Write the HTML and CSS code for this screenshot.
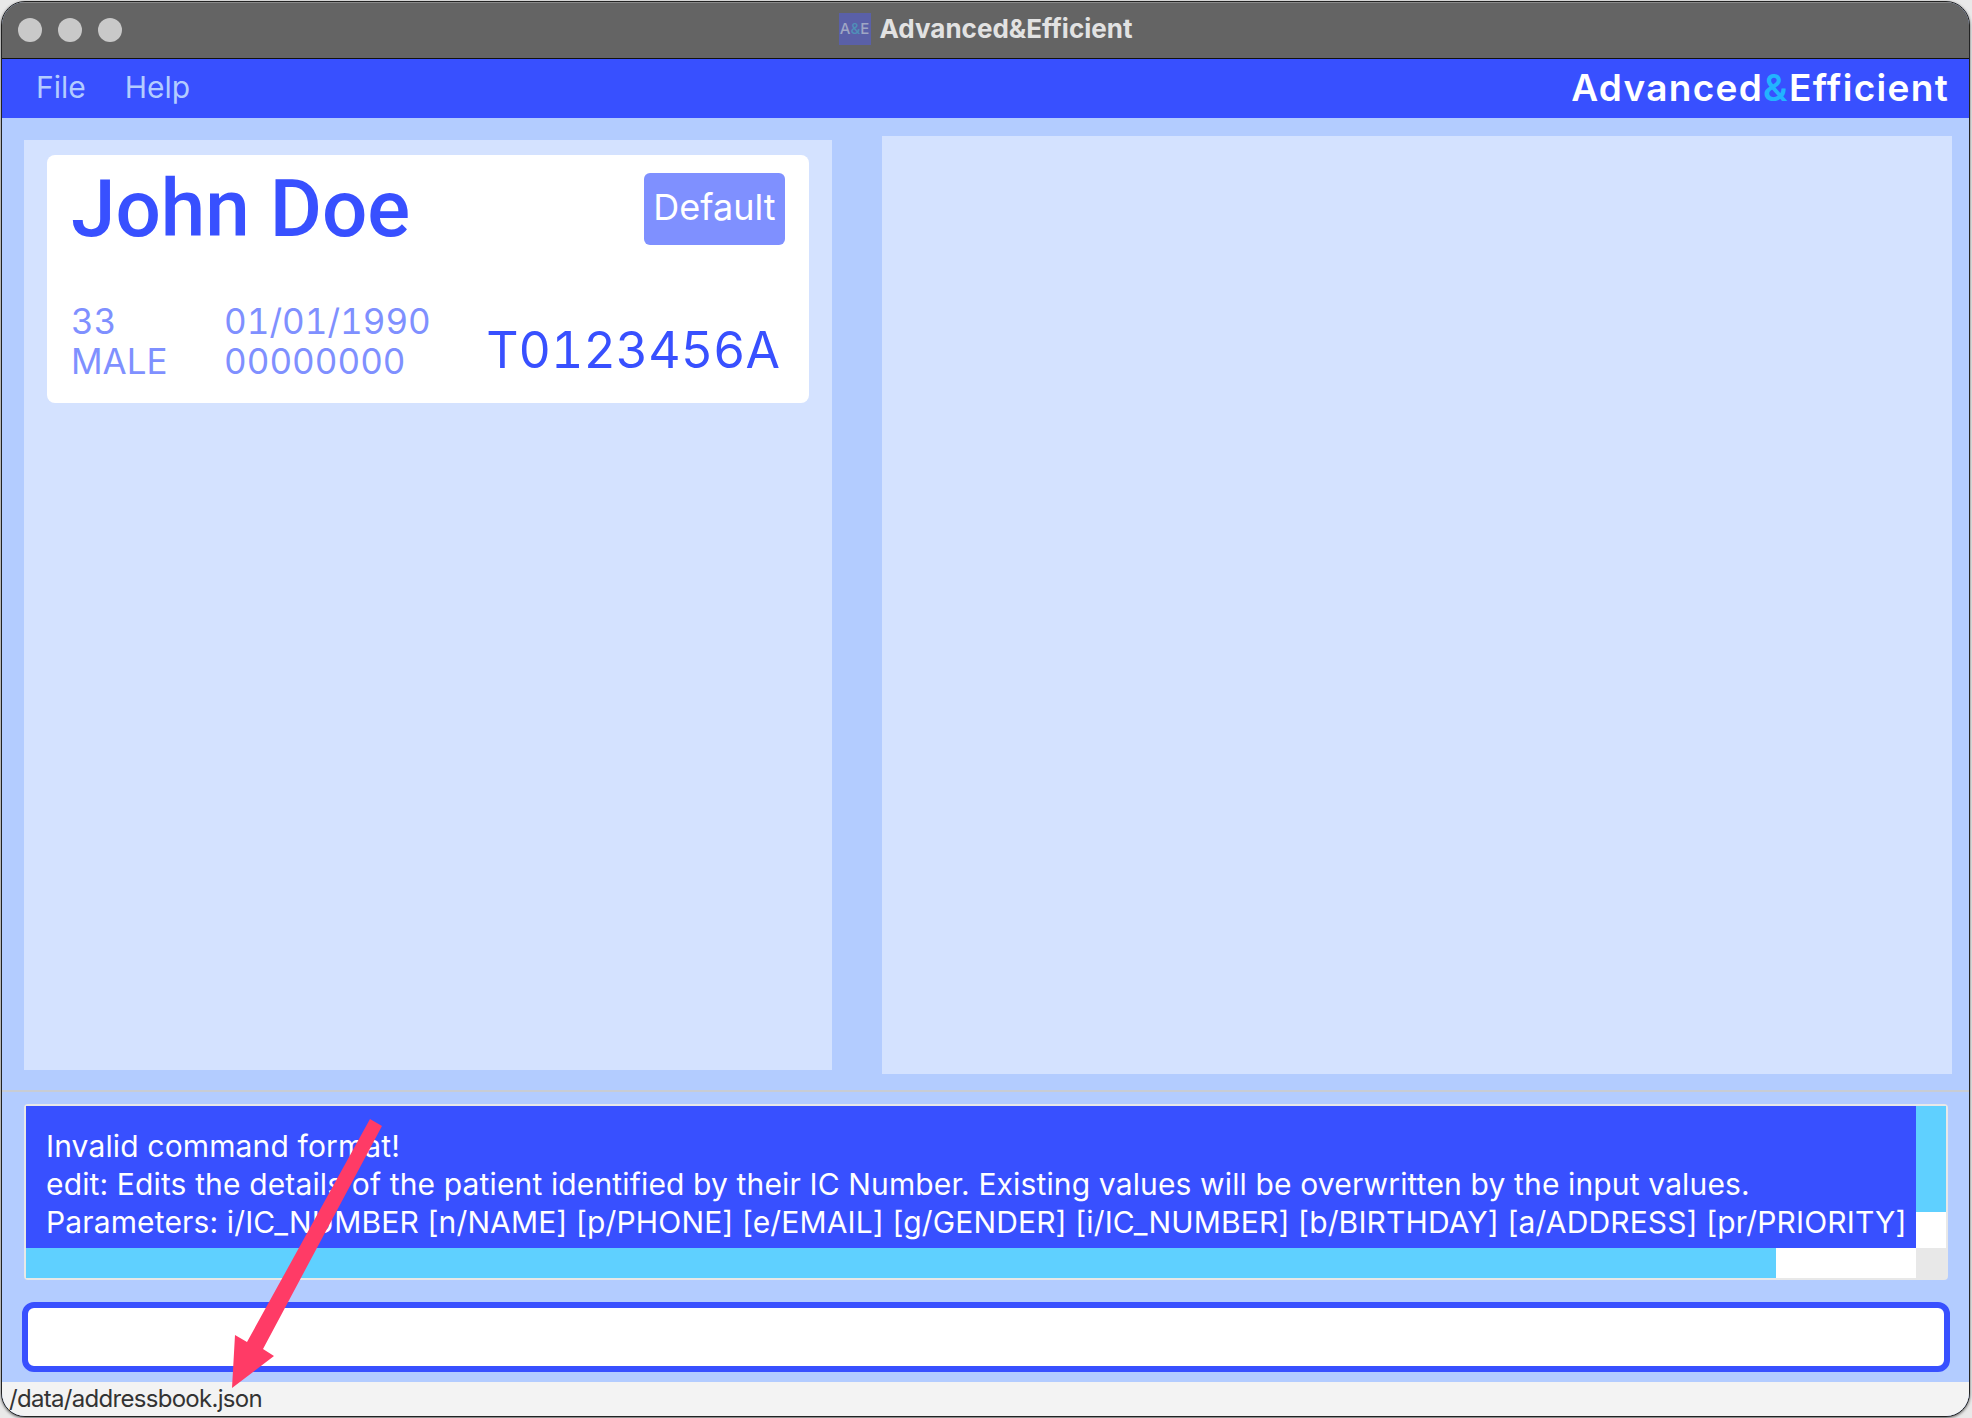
FILE: index.html
```html
<!DOCTYPE html>
<html lang="en">
<head>
    <meta charset="UTF-8">
    <meta name="viewport" content="width=device-width, initial-scale=1.0">
    <title>Advanced&amp;Efficient</title>
    <link rel="stylesheet" href="styles.css">
</head>
<body>
    <div class="window">
        <div class="titlebar">
            <div class="lights">
                <span class="light"></span>
                <span class="light"></span>
                <span class="light"></span>
            </div>
            <div class="window-title">
                <span class="app-icon">A<span class="app-icon-amp">&amp;</span>E</span>
                <span>Advanced&amp;Efficient</span>
            </div>
        </div>

        <div class="menubar">
            <div class="menu">
                <span class="menu-item">File</span>
                <span class="menu-item">Help</span>
            </div>
            <div class="logo">Advanced<span class="logo-amp">&amp;</span>Efficient</div>
        </div>

        <div class="content">
            <div class="panels">
                <div class="list-panel">
                    <div class="card">
                        <div class="card-top">
                            <div class="name">John Doe</div>
                            <div class="badge">Default</div>
                        </div>
                        <div class="card-bottom">
                            <div class="details">
                                <span>33</span>
                                <span>01/01/1990</span>
                                <span>MALE</span>
                                <span>00000000</span>
                            </div>
                            <div class="ic">T0123456A</div>
                        </div>
                    </div>
                </div>
                <div class="detail-panel"></div>
            </div>

            <div class="bottom">
                <div class="result">
                    <div class="result-main">
                        <div class="result-text">
                            <div>Invalid command format!</div>
                            <div>edit: Edits the details of the patient identified by their IC Number. Existing values will be overwritten by the input values.</div>
                            <div>Parameters: i/IC_NUMBER [n/NAME] [p/PHONE] [e/EMAIL] [g/GENDER] [i/IC_NUMBER] [b/BIRTHDAY] [a/ADDRESS] [pr/PRIORITY]</div>
                        </div>
                        <div class="vscroll"><div class="vthumb"></div></div>
                    </div>
                    <div class="hrow">
                        <div class="hscroll"><div class="hthumb"></div></div>
                        <div class="corner"></div>
                    </div>
                </div>
                <div class="command"></div>
            </div>
        </div>

        <div class="status">/data/addressbook.json</div>

        <svg class="arrow" width="1972" height="1418" viewBox="0 0 1972 1418">
            <polygon fill="#ff3b66" points="370,1119 382,1126 263,1349 274,1356 232,1388 235,1335 247,1342"/>
        </svg>
    </div>
</body>
</html>
```

FILE: styles.css
```css
* {
    box-sizing: border-box;
}
html, body {
    margin: 0;
    height: 100%;
}
body {
    background: #e9e9e9;
    font-family: Inter, "Liberation Sans", sans-serif;
    padding: 1px 2px 1px 1px;
}
.window {
    height: 100%;
    border: 1px solid #222;
    border-radius: 24px;
    box-shadow: 0 1px 3px rgba(0,0,0,0.6);
    overflow: hidden;
    display: flex;
    flex-direction: column;
    background: #b3ccff;
}
.titlebar {
    height: 57px;
    flex: none;
    background: #646464;
    border-top: 1px solid #8a8a8a;
    border-bottom: 1px solid #111;
    padding-bottom: 4px;
    position: relative;
    display: flex;
    align-items: center;
    justify-content: center;
}
.lights {
    position: absolute;
    left: 16px;
    top: 15px;
    display: flex;
    gap: 16px;
}
.light {
    width: 24px;
    height: 24px;
    border-radius: 50%;
    background: #c9c9c9;
}
.window-title {
    display: flex;
    align-items: center;
    gap: 9px;
    color: #e2e2e2;
    font-size: 26px;
    font-weight: 700;
}
.app-icon {
    width: 32px;
    height: 32px;
    background: #5a60a8;
    color: #9fa6c4;
    font-size: 15px;
    font-weight: 500;
    display: flex;
    align-items: center;
    justify-content: center;
}
.app-icon-amp {
    color: #4f8fb8;
}
.menubar {
    height: 59px;
    flex: none;
    background: #3850ff;
    display: flex;
    align-items: center;
    justify-content: space-between;
    padding: 0 20px 3px 34px;
}
.menu {
    display: flex;
    gap: 39px;
}
.menu-item {
    color: #b3ccff;
    font-size: 30px;
}
.logo {
    color: #fff;
    font-size: 37px;
    font-weight: 600;
    letter-spacing: 1.3px;
}
.logo-amp {
    color: #22b4ff;
}
.content {
    flex: 1;
    display: flex;
    flex-direction: column;
    min-height: 0;
}
.panels {
    height: 974px;
    flex: none;
    display: flex;
    border-bottom: 2px solid #c8ccd4;
    padding: 18px 16px 16px 22px;
}
.list-panel {
    width: 808px;
    height: 930px;
    margin-top: 4px;
    background: #d4e2ff;
    padding: 15px 23px;
}
.detail-panel {
    width: 1070px;
    height: 938px;
    margin-left: 50px;
    background: #d4e2ff;
}
.card {
    height: 248px;
    background: #fff;
    border-radius: 8px;
    padding: 18px 24px 0 24px;
}
.card-top {
    height: 128px;
    display: flex;
    justify-content: space-between;
}
.name {
    color: #3850ff;
    font-family: Roboto, sans-serif;
    font-size: 80px;
    font-weight: 500;
    line-height: 72px;
}
.badge {
    width: 141px;
    height: 72px;
    background: #7f90ff;
    border-radius: 6px;
    color: #fff;
    font-size: 36px;
    line-height: 68px;
    text-align: center;
}
.card-bottom {
    display: flex;
    justify-content: space-between;
}
.details {
    display: grid;
    grid-template-columns: 153px auto;
    font-size: 35px;
    line-height: 40px;
    color: #7f90ff;
    font-variant-numeric: tabular-nums;
}
.ic {
    color: #3850ff;
    font-size: 50px;
    margin: 19px 5px 0 0;
    font-variant-numeric: tabular-nums;
}
.bottom {
    flex: 1;
    padding: 12px 19px 10px 20px;
}
.result {
    height: 176px;
    width: 1924px;
    margin-left: 2px;
    border: 2px solid #e8e8e8;
    border-radius: 4px;
    background: #fff;
    display: flex;
    flex-direction: column;
}
.result-main {
    height: 142px;
    display: flex;
}
.result-text {
    width: 1890px;
    background: #3850ff;
    color: #fff;
    font-size: 30px;
    letter-spacing: 0.14px;
    line-height: 38px;
    padding: 21px 0 0 20px;
    overflow: hidden;
    white-space: nowrap;
}
.vscroll {
    width: 30px;
    background: #fff;
}
.vthumb {
    height: 106px;
    background: #5fd0ff;
}
.hrow {
    height: 30px;
    display: flex;
}
.hscroll {
    width: 1890px;
    background: #fff;
}
.hthumb {
    width: 1750px;
    height: 100%;
    background: #5fd0ff;
}
.corner {
    flex: 1;
    background: #e8e8e8;
}
.command {
    height: 70px;
    margin-top: 22px;
    border: 6px solid #3850ff;
    border-radius: 12px;
    background: #fff;
}
.status {
    height: 34px;
    flex: none;
    background: #f3f3f3;
    color: #333;
    font-size: 24px;
    letter-spacing: -0.7px;
    line-height: 34px;
    padding-left: 7px;
}
.arrow {
    position: absolute;
    left: 0;
    top: 0;
    pointer-events: none;
}
```
